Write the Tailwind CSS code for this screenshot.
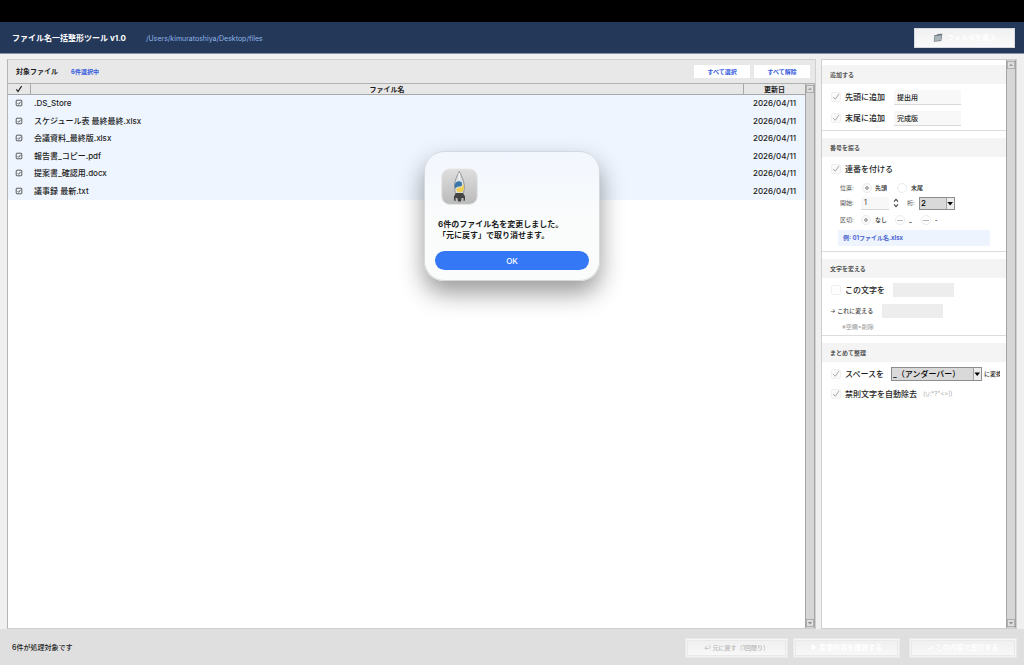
<!DOCTYPE html>
<html lang="ja">
<head>
<meta charset="utf-8">
<meta name="viewport" content="width=device-width, initial-scale=1">
<title>ファイル名一括整形ツール v1.0</title>
<script src="https://cdn.jsdelivr.net/npm/@tailwindcss/browser@4"></script>
</head>
<body class="flex min-h-screen flex-col bg-[#efefef] font-['Inter','Noto_Sans_CJK_JP',sans-serif] text-[8px] leading-none text-[#1c1c1c]">
<svg class="hidden" aria-hidden="true">
  <symbol id="up" viewBox="0 0 10 10"><path d="M0 0H10V10H0Z" fill="#a5a5a5"/><path d="M1 1H9V9H1Z" fill="#dedede"/><path d="M5 3.2L7.6 6.3H2.4Z" fill="#a3a3a3"/></symbol>
  <symbol id="down" viewBox="0 0 10 10"><path d="M0 0H10V10H0Z" fill="#a5a5a5"/><path d="M1 1H9V9H1Z" fill="#dedede"/><path d="M5 6.8L7.6 3.7H2.4Z" fill="#8c8c8c"/></symbol>
  <symbol id="boxed" viewBox="0 0 8 8"><rect x="1.2" y="1.2" width="5.6" height="5.6" rx=".8" fill="none" stroke="#333" stroke-width=".8"/><path d="M2.7 4.2L3.7 5.3L5.6 2.8" fill="none" stroke="#333" stroke-width=".8"/></symbol>
  <symbol id="tick" viewBox="0 0 10 10"><path d="M2.4 5.2L4.3 7.3L7.8 2.2" fill="none" stroke="#a8a8a8" stroke-width="1" stroke-linecap="round"/></symbol>
</svg>
<div class="h-[22px] bg-black"></div>
<header class="flex h-8 items-center border-b border-[#8793a8] bg-[#243859] pl-3 pr-[9px]">
  <h1 class="font-bold text-white">ファイル名一括整形ツール v1.0</h1>
  <p class="ml-5 pt-px text-[7px] text-[#8fb4e8]">/Users/kimuratoshiya/Desktop/files</p>
  <button class="ml-auto flex h-5 w-[101px] items-center justify-center gap-1 border border-[#d5d9df] bg-linear-to-b from-[#f1f1f1] to-[#fafafa] text-[7px] font-bold text-white">
    <svg class="size-[10px]" viewBox="0 0 10 10"><path d="M1.4 2.2L4 1.8L4.7 1.1L9.3 .8L8.3 8L.8 8.8Z" fill="#68757c"/><path d="M2.1 3L8.6 2.2L7.8 7.4L1.3 8.1Z" fill="#a9b5b9"/></svg>
    フォルダを選ぶ
  </button>
</header>
<main class="flex flex-1 gap-[5px] pt-[5px] pl-[7px] pr-[7px]">
  <section class="flex min-w-0 flex-1 flex-col border border-[#cfcfcf] border-l-[#b5b5b5] bg-white">
    <div class="flex h-[23px] items-center bg-[#e8e8e8] pl-2 pr-[5px]">
      <h2 class="text-[7px] font-bold">対象ファイル</h2>
      <p class="ml-[13px] text-[6px] font-bold text-[#3459dc]">6件選択中</p>
      <div class="ml-auto flex gap-1 text-[6px] font-bold text-[#3459dc]">
        <button class="h-[13px] w-14 bg-white">すべて選択</button>
        <button class="h-[13px] w-14 bg-white">すべて解除</button>
      </div>
    </div>
    <div class="flex flex-1 border-t border-[#b0b0b0]">
      <div class="min-w-0 flex-1">
        <table class="w-full table-fixed border-separate border-spacing-0">
          <thead>
            <tr class="h-[11px] bg-[#e7e7e7] text-[7px]">
              <th class="w-[23px] border-r border-b border-[#a8a8a8] p-0 pr-px"><svg class="mx-auto size-2" viewBox="0 0 8 8" role="img" aria-label="選択"><path d="M1.3 4.3L3 6.5L6.6 1.2" fill="none" stroke="#222" stroke-width="1.2"/></svg></th>
              <th class="border-r border-b border-[#a8a8a8] p-0 font-bold">ファイル名</th>
              <th class="w-[61px] border-b border-[#a8a8a8] p-0 font-bold">更新日</th>
            </tr>
          </thead>
          <tbody class="bg-[#eef5fe] font-medium *:h-[18px] *:even:h-[17px]">
            <tr><td class="p-0 pr-px pb-[2px]"><svg class="mx-auto size-2"><use href="#boxed"/></svg></td><td class="p-0 pb-[2px] pl-[3px]">.DS_Store</td><td class="p-0 pb-[2px] text-center">2026/04/11</td></tr>
            <tr><td class="p-0 pr-px pb-[2px]"><svg class="mx-auto size-2"><use href="#boxed"/></svg></td><td class="p-0 pb-[2px] pl-[3px]">スケジュール表 最終最終.xlsx</td><td class="p-0 pb-[2px] text-center">2026/04/11</td></tr>
            <tr><td class="p-0 pr-px pb-[2px]"><svg class="mx-auto size-2"><use href="#boxed"/></svg></td><td class="p-0 pb-[2px] pl-[3px]">会議資料_最終版.xlsx</td><td class="p-0 pb-[2px] text-center">2026/04/11</td></tr>
            <tr><td class="p-0 pr-px pb-[2px]"><svg class="mx-auto size-2"><use href="#boxed"/></svg></td><td class="p-0 pb-[2px] pl-[3px]">報告書_コピー.pdf</td><td class="p-0 pb-[2px] text-center">2026/04/11</td></tr>
            <tr><td class="p-0 pr-px pb-[2px]"><svg class="mx-auto size-2"><use href="#boxed"/></svg></td><td class="p-0 pb-[2px] pl-[3px]">提案書_確認用.docx</td><td class="p-0 pb-[2px] text-center">2026/04/11</td></tr>
            <tr><td class="p-0 pr-px pb-[2px]"><svg class="mx-auto size-2"><use href="#boxed"/></svg></td><td class="p-0 pb-[2px] pl-[3px]">議事録 最新.txt</td><td class="p-0 pb-[2px] text-center">2026/04/11</td></tr>
          </tbody>
        </table>
      </div>
      <div class="flex w-[10px] flex-col justify-between border-x border-[#a5a5a5] bg-[#d6d6d6]">
        <svg class="h-[10px] w-full"><use href="#up"/></svg><svg class="h-[10px] w-full"><use href="#down"/></svg>
      </div>
    </div>
  </section>

  <aside class="flex w-[196px] border border-[#cfcfcf] bg-white">
    <div class="min-w-0 flex-1">
      <section class="border-b border-[#dcdcdc] pt-[5px] pb-px">
        <h2 class="flex h-[19px] items-center bg-[#f4f4f4] pl-2 text-[6px] font-bold text-[#555]">追加する</h2>
        <div class="flex flex-col gap-[5px] pt-[5px] pb-[3px] pl-[9px]">
          <div class="flex h-4 items-center">
            <label class="flex items-center gap-1 font-medium"><span class="relative size-[10px]"><input type="checkbox" checked class="peer block size-[10px] appearance-none rounded-[2px] border border-[#f0f0f0] bg-[#fafafa]"><svg class="absolute inset-0 hidden size-[10px] peer-checked:block"><use href="#tick"/></svg></span>先頭に追加</label>
            <input type="text" aria-label="先頭に追加する文字" value="提出用" class="ml-[9px] h-[15px] w-[67px] border-b border-[#d8d8d8] bg-[#f8f8f8] px-[3px] text-[7px] font-medium">
          </div>
          <div class="flex h-4 items-center">
            <label class="flex items-center gap-1 font-medium"><span class="relative size-[10px]"><input type="checkbox" checked class="peer block size-[10px] appearance-none rounded-[2px] border border-[#f0f0f0] bg-[#fafafa]"><svg class="absolute inset-0 hidden size-[10px] peer-checked:block"><use href="#tick"/></svg></span>末尾に追加</label>
            <input type="text" aria-label="末尾に追加する文字" value="完成版" class="ml-[9px] h-[15px] w-[67px] border-b border-[#d8d8d8] bg-[#f8f8f8] px-[3px] text-[7px] font-medium">
          </div>
        </div>
      </section>

      <section class="border-b border-[#dcdcdc] pt-[7px] pb-[5px]">
        <h2 class="flex h-[19px] items-center bg-[#f4f4f4] pl-2 text-[6px] font-bold text-[#555]">番号を振る</h2>
        <div class="pl-[9px]">
          <label class="flex h-[23px] items-center gap-1 font-medium"><span class="relative size-[10px]"><input type="checkbox" checked class="peer block size-[10px] appearance-none rounded-[2px] border border-[#f0f0f0] bg-[#fafafa]"><svg class="absolute inset-0 hidden size-[10px] peer-checked:block"><use href="#tick"/></svg></span>連番を付ける</label>
        </div>
        <div class="pl-[18px] text-[6px]">
          <div role="radiogroup" aria-label="番号の位置" class="flex h-[15px] items-center">
            <span class="w-[22px] text-[#555]">位置:</span>
            <label class="flex items-center gap-[3px] font-medium"><input type="radio" name="pos" checked class="size-[10px] appearance-none rounded-full border border-[#ececec] checked:bg-[radial-gradient(#b0b0b0_2px,#fafafa_2px)]">先頭</label>
            <label class="ml-[10px] flex items-center gap-1 font-medium"><input type="radio" name="pos" class="size-[10px] appearance-none rounded-full border border-[#ececec]">末尾</label>
          </div>
          <div class="flex h-4 items-center text-[#555]">
            <label for="start" class="w-[21px]">開始:</label>
            <input id="start" type="text" value="1" class="h-[13px] w-7 border-b border-[#d8d8d8] bg-[#f8f8f8] px-[3px] text-[7px] text-[#333]">
            <button aria-label="開始番号を増減" class="ml-1"><svg class="h-[10px] w-[6px]" viewBox="0 0 6 10" fill="none" stroke="#444" stroke-width="1.1"><path d="M1 3.6L3 1.4L5 3.6M1 6.4L3 8.6L5 6.4"/></svg></button>
            <label for="digits" class="ml-2 w-3">桁:</label>
            <span class="relative block h-[13px] w-9"><select id="digits" class="block size-full appearance-none border border-[#8d8d8d] bg-[#d9d9d9] pl-px text-[8px] font-medium text-black"><option>1</option><option selected>2</option><option>3</option></select><svg class="pointer-events-none absolute top-px right-px h-[11px] w-2" viewBox="0 0 8 11"><path d="M0 0H8V11H0Z" fill="#ececec"/><path d="M.4 0V11" stroke="#888" stroke-width=".8"/><path d="M1.4 4H7L4.2 7.5Z"/></svg></span>
          </div>
          <div role="radiogroup" aria-label="区切り文字" class="flex h-[18px] items-center">
            <span class="w-[21px] text-[#555]">区切:</span>
            <label class="flex items-center gap-1 font-medium"><input type="radio" name="sep" checked class="size-[10px] appearance-none rounded-full border border-[#ececec] checked:bg-[radial-gradient(#b0b0b0_2px,#fafafa_2px)]">なし</label>
            <label class="ml-2 flex items-center gap-1 font-medium"><input type="radio" name="sep" class="size-[10px] appearance-none rounded-full border border-[#ececec] bg-[linear-gradient(#b5b5b5,#b5b5b5)] bg-[length:6px_1px] bg-center bg-no-repeat">_</label>
            <label class="ml-[9px] flex items-center gap-1 font-medium"><input type="radio" name="sep" class="size-[10px] appearance-none rounded-full border border-[#ececec] bg-[linear-gradient(#b5b5b5,#b5b5b5)] bg-[length:6px_1px] bg-center bg-no-repeat">-</label>
          </div>
        </div>
        <p class="mt-px mr-4 ml-4 flex h-4 items-center bg-[#edf4fe] pl-[5px] text-[6px] font-bold text-[#4a63d0]">例: 01ファイル名.xlsx</p>
      </section>

      <section class="border-b border-[#dcdcdc] pt-[7px]">
        <h2 class="flex h-[19px] items-center bg-[#f4f4f4] pl-2 text-[6px] font-bold text-[#555]">文字を変える</h2>
        <div class="flex h-6 items-center pl-[9px]">
          <label class="flex items-center gap-1 font-medium"><span class="relative size-[10px]"><input type="checkbox" class="block size-[10px] appearance-none rounded-[2px] border border-[#f0f0f0] bg-[#fdfdfd]"></span>この文字を</label>
          <input type="text" aria-label="置き換える文字" disabled class="ml-2 h-[14px] w-[61px] bg-[#ededed]">
        </div>
        <div class="flex h-[17px] items-center pl-2 text-[6px] font-medium text-[#444]">
          <label for="to">→ これに変える</label>
          <input id="to" type="text" disabled class="ml-[9px] h-[14px] w-[61px] bg-[#ededed]">
        </div>
        <p class="flex h-4 items-center pl-5 text-[6px] text-[#999]">※空欄=削除</p>
      </section>

      <section class="pt-[7px]">
        <h2 class="flex h-[19px] items-center bg-[#f4f4f4] pl-2 text-[6px] font-bold text-[#555]">まとめて整理</h2>
        <div class="flex h-[23px] items-center overflow-hidden pl-[9px] whitespace-nowrap">
          <label class="flex items-center gap-1 font-medium"><span class="relative size-[10px]"><input type="checkbox" checked class="peer block size-[10px] appearance-none rounded-[2px] border border-[#f0f0f0] bg-[#fafafa]"><svg class="absolute inset-0 hidden size-[10px] peer-checked:block"><use href="#tick"/></svg></span>スペースを</label>
          <span class="relative ml-[7px] block h-[14px] w-[91px] shrink-0"><select aria-label="スペースの変換先" class="block size-full appearance-none border border-[#8d8d8d] bg-[#d9d9d9] pl-px text-[8px] font-medium text-black"><option>_（アンダーバー）</option></select><svg class="pointer-events-none absolute top-px right-px h-3 w-2" viewBox="0 0 8 12"><path d="M0 0H8V12H0Z" fill="#ececec"/><path d="M.4 0V12" stroke="#888" stroke-width=".8"/><path d="M1.4 4.5H7L4.2 8Z"/></svg></span>
          <span class="ml-[2px] w-4 overflow-hidden text-[6px] leading-[10px] font-medium">に変換</span>
        </div>
        <div class="flex h-[18px] items-center pl-[9px]">
          <label class="flex items-center gap-1 font-medium"><span class="relative size-[10px]"><input type="checkbox" checked class="peer block size-[10px] appearance-none rounded-[2px] border border-[#f0f0f0] bg-[#fafafa]"><svg class="absolute inset-0 hidden size-[10px] peer-checked:block"><use href="#tick"/></svg></span>禁則文字を自動除去</label>
          <span class="ml-[6px] text-[6px] text-[#aaa]">(\/:*?"&lt;&gt;|)</span>
        </div>
      </section>
    </div>
    <div class="flex w-[10px] flex-col justify-between border-x border-[#a5a5a5] bg-[#d6d6d6]">
      <svg class="h-[10px] w-full"><use href="#up"/></svg><svg class="h-[10px] w-full"><use href="#down"/></svg>
    </div>
  </aside>
</main>
<footer class="flex h-9 items-center bg-[#dfdfdf] pt-px pr-[7px] pl-3 text-[7px]">
  <p class="font-medium">6件が処理対象です</p>
  <div class="ml-auto flex items-center text-[6px]">
    <button class="h-5 w-[103px] border-3 border-double border-[#e9e9e9] bg-linear-to-b from-[#f0f0f0] to-[#f8f8f8] font-medium text-[#b5b5b5]">↩ 元に戻す（1回限り）</button>
    <button class="ml-[5px] h-5 w-[107px] border-3 border-double border-[#e9e9e9] bg-linear-to-b from-[#f0f0f0] to-[#f8f8f8] text-[7px] font-bold text-white">▶ 変更内容を確認する</button>
    <button class="ml-[9px] h-5 w-[108px] border-3 border-double border-[#e9e9e9] bg-linear-to-b from-[#f0f0f0] to-[#f8f8f8] text-[7px] font-bold text-white">✓ この内容で実行する</button>
  </div>
</footer>

<div role="dialog" aria-labelledby="msg" class="absolute top-[151px] left-1/2 w-44 -translate-x-1/2 rounded-[20px] border border-[#d5d8dc] bg-linear-to-b from-[#f2f6fe] to-[#fafcfc] to-50% px-[10px] pt-4 pb-[10px] shadow-[0_12px_24px_rgba(0,0,0,0.4)]">
  <svg class="ml-[6px] size-[37px]" viewBox="0 0 37 37">
    <defs><linearGradient id="tile" x2="0" y2="1"><stop stop-color="#dedede"/><stop offset="1" stop-color="#bababa"/></linearGradient></defs>
    <rect x=".7" y="1" width="35.6" height="35.4" rx="8" fill="url(#tile)" stroke="#e6e6e6"/>
    <path d="M18.3 3.5C16 8 13.8 12.5 13.5 17C13.3 21 14 24 15 26H21.8C22.9 24 23.5 21 23.2 17C22.8 12.5 20.6 8 18.3 3.5Z" fill="#dcdfe2" stroke="#8b8d8f" stroke-width=".9"/>
    <path d="M18.3 5V12" stroke="#f4f4f4" stroke-width="1.4"/>
    <path d="M14 16Q15 13.2 18 13.2Q21 13.3 21 16V17.2Q20.5 18.4 18 18.4Q15.2 18.4 14.7 20.8Q13.3 19 14 16Z" fill="#3977ab"/>
    <path d="M22.6 16.6Q23.3 20 22.4 22.2Q21 24.6 18 24.4Q15.3 24 15.5 21Q16 19.4 18.5 19.4Q21.6 19.4 21.7 16.6Z" fill="#f0cf54"/>
    <path d="M14.8 25H21.9L24 28.5V32.5L22.5 33V30H20.6L20 33.5H17L16.4 30H14.6V33L13 32.5V28.5Z" fill="#444"/>
  </svg>
  <p id="msg" class="mt-[14px] pl-[3px] leading-[11px] font-bold">6件のファイル名を変更しました。<br>「元に戻す」で取り消せます。</p>
  <button class="mt-[10px] h-[19px] w-full rounded-full bg-[#3478f6] font-medium text-white">OK</button>
</div>
</body>
</html>
